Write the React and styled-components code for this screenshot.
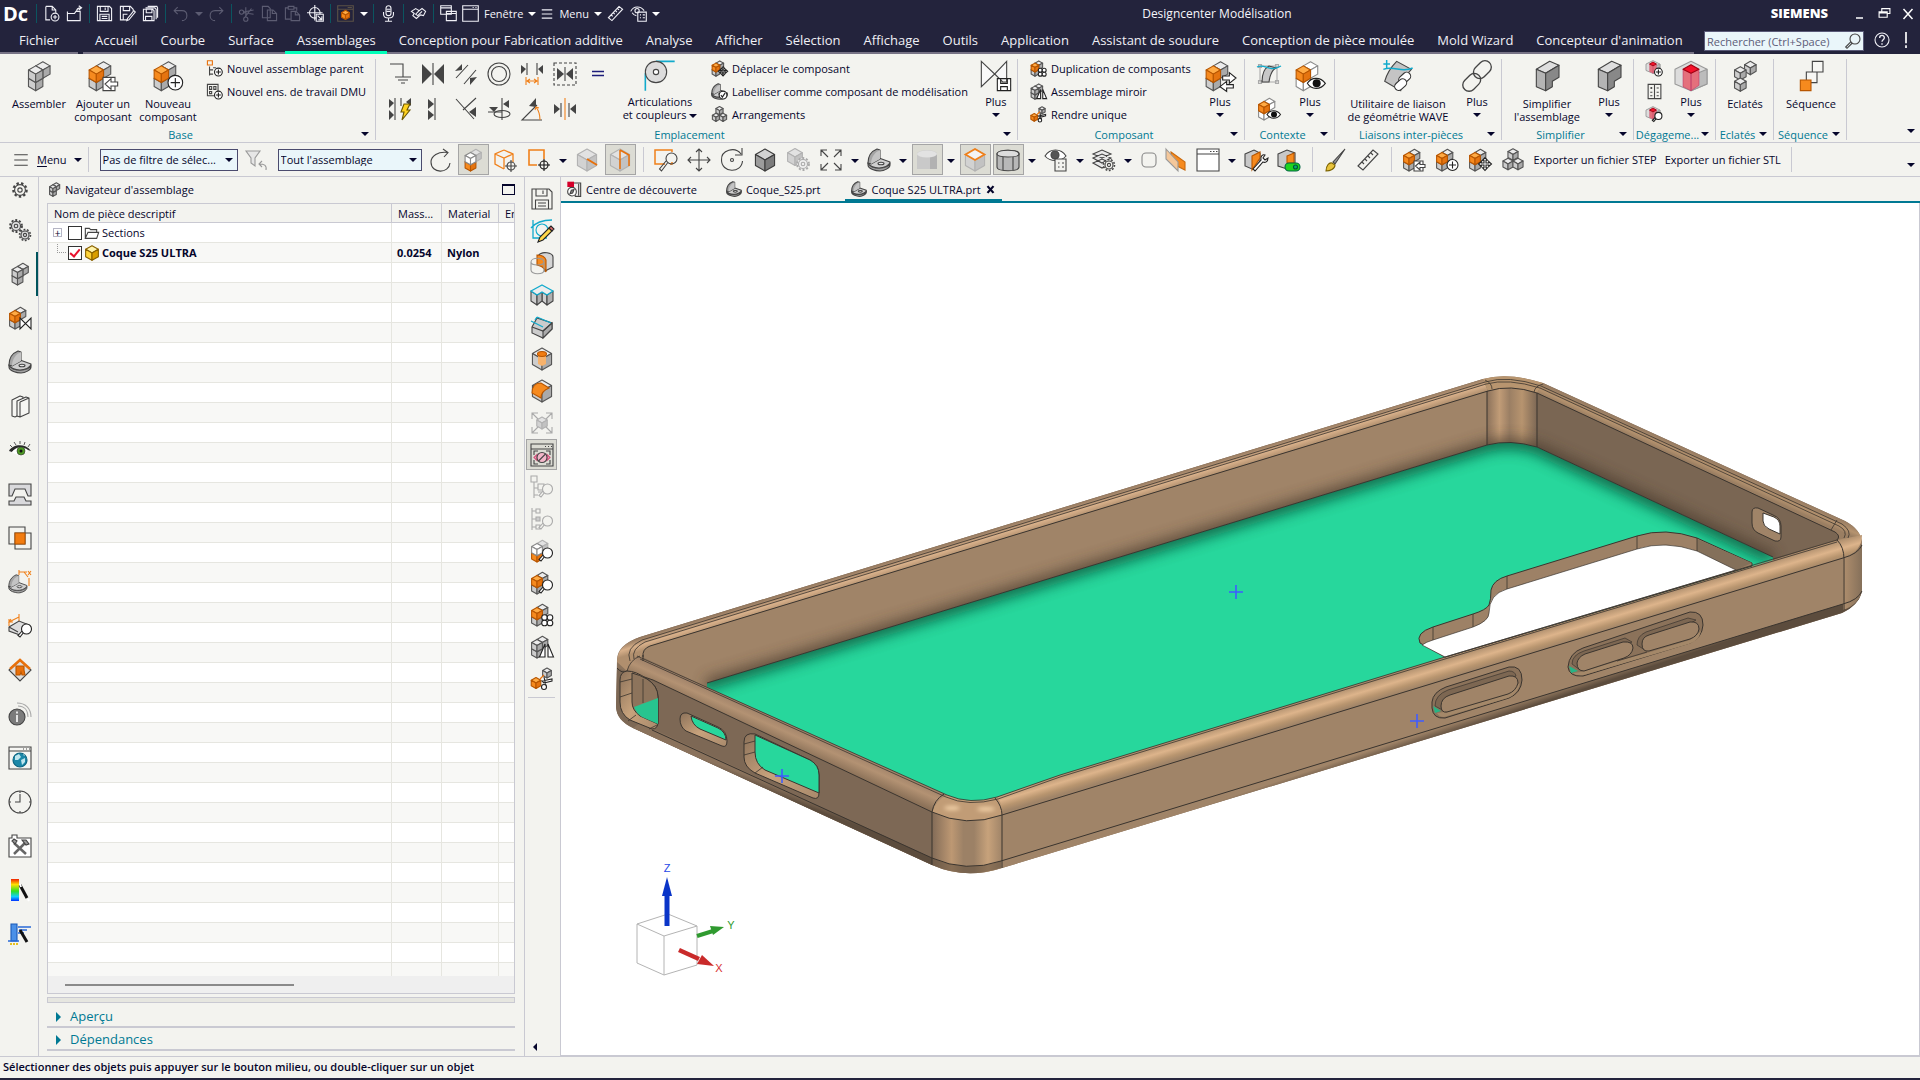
import React from 'react'
import styled, { createGlobalStyle, css } from 'styled-components'

const GlobalStyle = createGlobalStyle`
  * { box-sizing: border-box; }
  html, body, #root { height: 100%; margin: 0; }
  body {
    background: #f3f3ef;
    color: #05052b;
    font-family: "Open Sans", "Noto Sans", sans-serif;
    font-size: 11px;
    line-height: 13px;
    overflow: hidden;
  }
  button, input, select { font: inherit; color: inherit; }
  button { background: none; border: 0; padding: 0; cursor: pointer; }
`

/* ---------- icon parts ---------- */

const K = '#444'
const faces = {
  grey: ['#ececec', '#cdcdcd', '#aaaaaa', '#555'],
  dark: ['#d2d2d2', '#9c9c9c', '#7c7c7c', '#3c3c3c'],
  orange: ['#ffab45', '#f68a1e', '#e57410', '#b85600'],
  ghost: ['#fff', '#fff', '#fff', '#8a8a8a'],
  faint: ['#e2e2e2', '#d2d2d2', '#c2c2c2', '#b2b2b2'],
  yellow: ['#fff3a8', '#ffd43b', '#d99e00', '#8a6200'],
}

function Cube({ x, y, r, c = 'grey' }) {
  const [top, left, right, line] = faces[c]
  const w = r * 0.87
  const h = r / 2
  return (
    <g stroke={line} strokeLinejoin="round">
      <path fill={top} d={`M${x} ${y - r}l${w} ${h}l${-w} ${h}l${-w} ${-h}z`} />
      <path fill={left} d={`M${x - w} ${y - h}l${w} ${h}v${r}l${-w} ${-h}z`} />
      <path fill={right} d={`M${x + w} ${y - h}l${-w} ${h}v${r}l${w} ${-h}z`} />
    </g>
  )
}

const Asm = ({ a = 'grey', b = 'grey', c = 'grey', x = 9, y = 10.6 }) => (
  <>
    <Cube x={x} y={y + 6.2} r={6.2} c={c} />
    <Cube x={x + 5.4} y={y - 3.1} r={6.2} c={b} />
    <Cube x={x} y={y} r={6.2} c={a} />
  </>
)
const AsmO = () => <Asm a="orange" x={7} />
const PlusC = () => (
  <g stroke="#222">
    <circle cx="17.5" cy="17" r="5.5" fill="#fff" />
    <path d="M17.5 13.5v7M14 17h7" />
  </g>
)
const Mag = ({ c = '#222', fill = '#fff' }) => (
  <g stroke={c}>
    <path d="M15 17l-4 5-2-1.500L13.600 15.500" fill={fill} />
    <circle cx="17.500" cy="14" r="5" fill={fill} />
  </g>
)
const MoveC = ({ x = 17, y = 16, r = 6.5 }) => (
  <path
    fill="#fff"
    stroke="#222"
    d={`M${x} ${y - r}l2.500 2.800h-1.500v${r - 3.800}h${r - 3.800}v-1.500l2.800 2.500l-2.800 2.500v-1.500h${3.800 - r}v${r - 3.800}h1.500l-2.500 2.800l-2.500 -2.800h1.500v${3.800 - r}h${3.800 - r}v1.500l-2.800 -2.500l2.800 -2.500v1.500h${r - 3.800}v${3.800 - r}h-1.500z`}
  />
)
const Quad = () => (
  <g fill="#fff" stroke="#222">
    <circle cx="14.500" cy="14.500" r="2.800" /><circle cx="20" cy="14.500" r="2.800" />
    <circle cx="14.500" cy="20" r="2.800" /><circle cx="20" cy="20" r="2.800" />
  </g>
)
const Mirror = () => <path fill="#fff" stroke="#222" d="M15 9v13H9.500zM18 9v13h5.500z" />
const Bracket = () => (
  <g stroke={K} strokeLinejoin="round">
    <path fill="#a0a0a0" d="M1 15c1 3 6 5 11 5s11-2 11-5v2c0 3-6 6-10 6S1 21 1 17z" />
    <path fill="#cfcfcf" d="M1 15l11-5 11 4c0 3-6 6-11 6S2 18 1 15z" />
    <path fill="#a4a4a4" d="M1 15C1 8 5 3 10 1l3 1v9l-9 5z" />
    <path fill="#c4c4c4" d="M4 16C4 9 8 4 13 2v9z" stroke="none" />
    <ellipse cx="14" cy="15.500" rx="3" ry="1.300" fill="#e6e6e6" />
  </g>
)
const Clearance = () => (
  <g strokeLinejoin="round">
    <path fill="#dcdcdc" stroke="#999" d="M0 7L12 1l12 6v11l-12 5-12-5z" />
    <path fill="#bcbcbc" stroke="#999" d="M12 12l12-5v11l-12 5z" />
    <path fill="#e4707c" stroke="#b36" strokeWidth=".4" d="M6 7l6 3v13l-6-3zM12 10l6-3v12l-6 4z" />
    <path fill="#f5112a" stroke="#a00010" d="M6 7l6-3.500L18 7l-6 3z" />
  </g>
)
const Elbow = () => (
  <g strokeLinejoin="round">
    <path fill="#dedede" d="M4 7l10-6 7 3-10 6z" />
    <path fill="#b4b4b4" d="M4 7l7 3v13l-7-3z" />
    <path fill="#888" d="M11 10l10-6v9l-5 3v4l-5 3z" />
  </g>
)
const Gear = ({ x = 12, y = 12, r = 6, fill = 'none' }) => (
  <g fill={fill}>
    <circle cx={x} cy={y} r={r + 1.500} strokeDasharray={`${r * 0.45} ${r * 0.4}`} strokeWidth={r * 0.4} />
    <circle cx={x} cy={y} r={r} fill={fill} />
    <circle cx={x} cy={y} r={r * 0.4} />
  </g>
)
const Floppy = () => <path d="M2 2h17l3 3v17H2zM6 2v7h11V2M13 3.500v3.500M5.500 22v-9h13v9M8 16h8M8 19h8" />
const Expand = () => <path d="M2 8V2h6M2 2l7 7M22 8V2h-6M22 2l-7 7M2 16v6h6M2 22l7-7M22 16v6h-6M22 22l-7-7" />
const Folder = () => <path d="M2 20V5h6l2 2h9v4M2 20l4-9h16l-3 9z" />
const tri = (d) => <path d={d} fill={K} stroke="none" />

const icons = {
  /* quick access bar */
  newDoc: <><path d="M4 2h9l5 5v4M13 2v5h5M4 2v19h6" /><circle cx="17" cy="17" r="5.500" /><path d="M17 14v6M14 17h6" /></>,
  open: <><path d="M2 9v13h18V9h-6l-2 3H2M15 9c0-4 2-5 6-5M18 1l4 3-4 3" /></>,
  save: <Floppy />,
  saveAs: <><path d="M12 21H2V2h14l4 4v2M6 2v6h9V2M6 21v-8h6" /><path d="M21 8l2 2-9 11-3 1 1-3z" /></>,
  saveAll: <><path d="M2 6h13l2 2v14H2zM6 6v5h8V6M5 22v-6h9v6M5 4h13l2 2v14M8 2h13l1 2v14" /></>,
  undo: <path d="M8 3L3 8l5 5M3 8h11c5 0 7 3 7 7s-3 7-7 7" />,
  redo: <path d="M16 3l5 5-5 5M21 8H10c-5 0-7 3-7 7s3 7 7 7" />,
  cut: <><circle cx="5" cy="10" r="3" /><circle cx="11" cy="20" r="3" /><path d="M8 11l14 2M11 17V3M10 17l9-12M8 10l14-3" /></>,
  copy: <path d="M2 2h8l3 3v13H2zM9 7h8l5 5v10H9zM16 7v5h6" />,
  paste: <path d="M9 20H2V4h4M14 4h4v4M6 2h8v4H6zM10 9h7l5 5v8H10zM16 9v5h6" />,
  target: <><circle cx="11" cy="11" r="7.500" /><path d="M11 0v22M0 11h22" /><path fill="#23233c" d="M13 13h10v10H13z" /><path d="M15 15l6 6M21 16v5h-5" /></>,
  winCube: <><path stroke="#5b5246" d="M1 1h22v22H1zM1 6h22M15 3.500h6" /><Cube x={12} y={14} r={6.5} c="orange" /></>,
  mic: <><rect x="8.500" y="1" width="7" height="14" rx="3.500" /><path d="M5 10v3c0 7 14 7 14 0v-3M12 18v5M7 23h10M9 6h6M9 9h6" /></>,
  hands: <path d="M2 9l6-4 5 3 4-3 5 4-3 6-4-1-6 5-5-4 2-3zM13 8l-5 5 3 2 6-6" />,
  windows: <path d="M1 1h15v12H1zM1 4h15M9 9h14v13H9zM9 12h14" />,
  win: <path d="M1 1h22v22H1zM1 6h22M15 3.500h1.500M19 3.500h1.500" />,
  lines: <path d="M3 5h18M3 12h18M3 19h18" />,
  ruler: <path d="M2 18L17 2l5 4L7 22zM6 14l2 2M9 11l2 2M12 8l2 2M15 5l2 2" />,
  eyeList: <><path d="M1 9c4-8 14-8 19-1" /><circle cx="10" cy="8" r="3" /><path d="M3 11c2 3 4 4 6 4" /><path d="M11 10h12v13H11zM14 14h1.500M18 14h3M14 18h1.500M18 18h3" /></>,
  minimize: <path d="M4 20h14" strokeWidth="3" />,
  restore: <path d="M7 9V3h15v9h-5M2 9h15v10H2zM2 11h15" />,
  close: <path d="M3 2l18 20M21 2L3 22" strokeWidth="3" />,
  closeBold: <path d="M4 3l16 18M20 3L4 21" strokeWidth="6" />,
  help: <><circle cx="12" cy="12" r="10.500" /><path d="M8.500 9c0-5 7-5 7-.5 0 3-3.500 3-3.500 6M12 17v2" strokeWidth="2" /></>,
  bang: <path d="M12 0v17M12 20v4" strokeWidth="2.500" />,
  search: <><circle cx="15" cy="9" r="7.500" /><path d="M9 13l-8 8 2 2 8-8" /></>,

  /* ribbon */
  asm: <Asm x={9.5} />,
  asmArrow: <><AsmO /><path fill="#fff" d="M12 13h9v10h-9z" /><path fill="#fff" d="M23 16.500h-5V14l-4.500 4 4.500 4v-2.500h5z" /></>,
  asmPlus: <><AsmO /><PlusC /></>,
  newParent: <><path stroke="#e8700a" d="M2 1h7v6H2z" /><path d="M5 9v13M5 14h5M5 20h5M10 11h4" /><PlusC /></>,
  newSet: <><path d="M2 2h15v16H2zM5 5h3v4H5zM11 5h3v4h-3zM5 12h3v3H5z" /><PlusC /></>,
  fix: <path d="M2 2h13v13M7 15h16M10 18h10M13 21h4" />,
  touch: <><path d="M12 1v22" />{tri('M1 2l10 10L1 22z')}{tri('M23 2L13 12l10 10z')}</>,
  parallel: <><path d="M2 16L14 3M10 22L22 8" />{tri('M1 9l7-7v6z')}{tri('M23 15l-7 8v-7z')}</>,
  concentric: <><circle cx="12" cy="12" r="11" /><circle cx="12" cy="12" r="7.500" /></>,
  distance: <><path d="M7 1v12M17 1v12" />{tri('M1 3l5 4-5 5z')}{tri('M23 3l-5 4 5 5z')}<path stroke="#f0801a" d="M6 15v8M18 15v8M7 19h10M10 17l-3 2 3 2M14 17l3 2-3 2" /></>,
  fitBox: <><path strokeDasharray="3 2" d="M1 1h22v22H1z" /><path d="M12 5v14" />{tri('M4 6l7 6-7 6z')}{tri('M20 6l-7 6 7 6z')}</>,
  equal: <path stroke="#1d1d7a" strokeWidth="1.500" d="M6 9.500h12M6 13.500h12" />,
  auto: <><path d="M7 1v22M13 1v8" />{tri('M1 2l5 4-5 5z')}{tri('M1 13l5 5-5 5z')}{tri('M23 1l-5 4 5 4z')}<path fill="#ffd21f" stroke="#6b5600" d="M16 7h6l-3 6h3l-8 10 2-8h-3z" /></>,
  align: <><path d="M14 1v22" />{tri('M7 2l6 5-6 5z')}{tri('M7 13l6 5-6 5z')}</>,
  perp: <><path d="M2 2l18 20M9 13L22 1" />{tri('M22 10v10l-7-5z')}</>,
  axisLock: <><path d="M15 1v22M1 15h14" />{tri('M2 10h9l-4 5z')}{tri('M22 3v8l-6-4z')}<ellipse cx="15" cy="17" rx="8" ry="3.500" /></>,
  angle: <><path d="M22 23H2L17 8" />{tri('M9 9l7-8v9z')}<path stroke="#f0801a" d="M20 23c0-6-1-9-4-13M15 13l1-3 3 1" /></>,
  center: <><path stroke="#f0801a" d="M12 1v22" /><path d="M8 6v14M16 6v14" />{tri('M1 7l6 5-6 5z')}{tri('M23 7l-6 5 6 5z')}</>,
  joint: <><path stroke="#11aacc" d="M1 10v13M9 1h14" strokeWidth="1.200" /><circle cx="9" cy="9" r="8" fill="#dcdcdc" /><circle cx="9" cy="9" r="2" fill="#fff" /></>,
  asmMove: <><AsmO /><MoveC /></>,
  label: <><Bracket /><circle cx="17" cy="17" r="5.500" fill="#fff" stroke="#222" /><path stroke="#222" d="M14 17l2 3 4-6" /></>,
  pile: <><Cube x={12} y={6.5} r={5.8} /><Cube x={7} y={16} r={5.8} /><Cube x={17} y={16} r={5.8} /></>,
  plusSave: <><path fill="#f8f8f8" d="M1 1l10 9.500L1 20zM20 1l-9 9.500 6 6H20z" /><path fill="#fff" stroke="#222" d="M13 14h10v9H13zM15.500 14v3.500h5V14M15.500 23v-3h5v3" /></>,
  asmQuad: <><AsmO /><Quad /></>,
  asmMirror: <><Asm x={7} /><Mirror /></>,
  unique: <><Cube x={17} y={6} r={5} /><Cube x={6} y={16} r={5.500} c="orange" /><path stroke="#e8700a" d="M10 12l4-4" /><path stroke="#222" fill="#fff" d="M12 14l10-2v2l-8 2zM14 10l2 9" /><circle cx="14" cy="20" r="2.500" fill="#fff" stroke="#222" /></>,
  asmSwap: <><AsmO /><path fill="#fff" stroke="#222" d="M14 12h5V9.500l5 4-5 4V15h-5zM22 18.500h-5V16l-5 4 5 3.500V21h5z" /></>,
  ctxSketch: <><path stroke="#aaa" d="M3 4h17v16H3zM1.500 2.500h3v3h-3zM18.500 2.500h3v3h-3zM1.500 18.500h3v3h-3zM18.500 18.500h3v3h-3z" /><path fill="#c8c8c8" d="M5 20C5 12 8 6 12 4l7 2c-4 2-6 6-7 14z" /><path stroke="#11aacc" strokeWidth="1.300" d="M0 5c8-4 12 6 24-1" /></>,
  asmEye: <><Asm a="orange" b="ghost" c="ghost" x={7} /><path fill="#fff" stroke="#222" d="M10 17.500c3-5 10-5 13.500 0-3.500 5-10.500 5-13.500 0z" /><circle cx="17" cy="17.500" r="3" fill="#111" stroke="none" /></>,
  wave: <><path fill="#c4c4c4" d="M2 16C4 9 8 4 11 1l11 6c-5 5-7 10-8 16z" /><path stroke="#11aacc" strokeWidth="1.100" d="M1 7c8-3 14 3 22-1M1 3h5M3.500 0v6" /><g fill="#fff" stroke="#333"><rect x="12" y="10.500" width="10" height="6" rx="3" transform="rotate(-42 17 13.500)" /><rect x="9" y="15.500" width="10" height="6" rx="3" transform="rotate(-42 14 18.500)" /></g></>,
  link: <g strokeWidth="1"><rect x="8.500" y="2.500" width="15" height="9.500" rx="4.700" transform="rotate(-45 16 7.200)" /><rect x=".5" y="12" width="15" height="9.500" rx="4.700" transform="rotate(-45 8 16.700)" /></g>,
  elbow: <Elbow />,
  clrPlus: <><g transform="scale(.82)"><Clearance /></g><PlusC /></>,
  clrSheet: <path d="M3 2h18v20H3zM12 2v20M6 7h3M7.500 5.500v3M15 7h3M6 13h3M6 18h3M15 13h3M15 18h3" />,
  clrMag: <><g transform="scale(.82)"><Clearance /></g><Mag /></>,
  clearance: <Clearance />,
  exploded: <><Cube x={16} y={6} r={5} /><Cube x={8.500} y={10} r={5} /><Cube x={8.500} y={18.500} r={5} /></>,
  sequence: <g><path fill="#f6f6f3" d="M13 1h8v8h-8zM8.500 9h8v8h-8z" /><path fill="#f68a1e" stroke="#b85600" d="M4 15h8v8H4z" /></g>,

  /* second tool bar */
  funnel: <g stroke="#999"><path fill="#e6e6e6" d="M2 3h14l-5 7v8l-4-3v-5z" /><path d="M22 22c1-5-2-6-7-6M18 13l-3 3 3 3" /></g>,
  refresh: <path d="M15 1l5 3.500-4 4.500M20 4.500C10 3 3 8 3 14c0 12 18 12 19 1" />,
  asmLow: <><Asm a="ghost" b="faint" c="orange" x={9.5} /></>,
  cubeAim: <><path stroke="#f0801a" strokeWidth="1.300" d="M10 2l9 4v8M10 2L1 6v10l9 5M1 6l9 4 9-4M10 10v11" /><circle cx="17" cy="18" r="4" /><path d="M17 12v12M11 18h12" /></>,
  boxAim: <><path stroke="#f0801a" strokeWidth="1.600" d="M17 11V2H2v15h8" /><circle cx="17" cy="17" r="4" stroke="#111" /><path stroke="#111" d="M17 11v12M11 17h12" /></>,
  cubeEdge: <><Cube x={12} y={12} r={11} c="faint" /><path stroke="#e8700a" strokeWidth="2" d="M12 11l10 6" /></>,
  cubeWire: <><Cube x={12} y={12} r={11} c="faint" /><path stroke="#e8700a" strokeWidth="1.500" d="M12 2v19M12 2l9 5v11" /></>,
  zoomBox: <><path stroke="#f0801a" strokeWidth="1.500" d="M18 4V2H1v14h10M18 14v2h-2" /><circle cx="17.500" cy="10.500" r="5.500" /><path d="M13.500 15l-6 8-2-2 6.500-8" /></>,
  move: <path d="M12 1v22M1 12h22M9 4l3-3 3 3M9 20l3 3 3-3M4 9l-3 3 3 3M20 9l3 3-3 3" />,
  rotate: <><path d="M21 6C15-2 1 2 1.500 12c0 13 20 14 21 1M22 0v7h-7" /><circle cx="12" cy="12" r="1.500" /></>,
  cube: <Cube x={12} y={12} r={11} c="dark" />,
  cubeGear: <><Cube x={9} y={9} r={8.500} c="faint" /><g stroke="#aaa"><Gear x={17} y={16} r={4.500} fill="#eee" /></g></>,
  expand: <Expand />,
  bracket: <Bracket />,
  cylinder: <><path fill="#c9c9c9" stroke="none" d="M2 6c0-5 20-5 20 0v15H2z" /><path fill="#b2b2b2" stroke="none" d="M15 6h7v15h-7z" /><ellipse cx="12" cy="6" rx="10" ry="3.500" fill="#e2e2e2" stroke="none" /></>,
  cubeTop: <><Cube x={12} y={12} r={11} c="faint" /><path stroke="#f0801a" strokeWidth="1.800" fill="#f3f3f3" d="M12 1l9.500 5.500L12 12 2.500 6.500z" /></>,
  drum: <><path fill="#b8b8b8" d="M1 6c0-5 22-5 22 0v13c0 5-22 5-22 0z" /><path fill="#ddd" d="M1 6c0-5 22-5 22 0 0 4-22 4-22 0z" /><path d="M7 9v13M17 9v13" /></>,
  eyeSheet: <><path fill="#fff" d="M1 8c5-8 16-8 21 0-5 6-16 6-21 0z" /><circle cx="11" cy="7" r="4" fill="#555" /><path fill="#f3f3ef" d="M11 11h11v12H11zM14 15h1.500M18 15h2M14 19h1.500M18 19h2" /></>,
  layers: <><path fill="#e9e9e9" d="M1 15l9-4 9 4-9 5zM1 10l9-4 9 4-9 5zM1 6l9-4 9 4-9 4z" /><Gear x={17} y={17} r={4} fill="#f3f3ef" /></>,
  roundSq: <rect x="5" y="5" width="14" height="14" rx="4" stroke="#888" />,
  plane: <><path fill="#f68a1e" stroke="#c96a10" d="M8 4l14 10v8L8 15z" /><path fill="#f4c79a" stroke="#999" d="M3 1l12 13v9L3 11z" /></>,
  winLight: <><path fill="#fff" d="M1 1h22v22H1z" /><path d="M1 6h22M14 3.500h1.500M17 3.500h1.500M20 3.500h1.500" /></>,
  wrench: <><path fill="#c8c8c8" d="M1 6l9-4 6 3v12l-8 4-7-3z" /><path fill="#f68a1e" stroke="#b85600" d="M8 8l8-4v6l-8 12z" /><path fill="#fff" stroke="#222" d="M9 21l8-9c-1-4 2-6 4-5l-2 3 2 2 3-2c0 4-3 5-5 4l-8 9z" /></>,
  toggle: <><path fill="#c8c8c8" d="M1 6l9-4 8 3v10l-8 6-9-3z" /><path fill="#f68a1e" stroke="#b85600" d="M10 8l7-3v10h-7z" /><rect x="8" y="15" width="15" height="8" rx="4" fill="#1fd41f" stroke="#064" /><circle cx="18.500" cy="19" r="2" fill="#0a7" stroke="#053" /></>,
  brush: <><path fill="#999" d="M22 1L10 14l2 2z" /><path fill="#e8c33c" stroke="#7a6200" d="M3 23c0-5 3-9 6-8l3 2c0 4-5 6-9 6z" /></>,

  /* resource bar */
  gear: <Gear r={6.500} />,
  gears: <><Gear x={8} y={8} r={4.500} fill="#ddd" /><Gear x={17} y={17} r={4} fill="#ddd" /></>,
  asmTouch: <><AsmO /><path fill="#fff" stroke="#222" d="M12 12v11l11-11v11z" /></>,
  books: <g fill="#f6f6f3" strokeLinejoin="round"><path d="M4 6l8-4 3 1v16l-8 4-3-1z" /><path d="M9 7l9-4 3 1v15l-9 4-3-1zM12 8l9-4M12 8v15" /></g>,
  eye: <><path fill="#2a2a2a" stroke="none" d="M1 13c4-7 16-8 22 0l-3-1c-5-4-12-4-16 2z" /><path fill="#fff" stroke="none" d="M4 14c4-5 12-5 16-1-4 4-12 5-16 1z" /><circle cx="13" cy="13" r="4" fill="#4c9a22" stroke="#333" strokeWidth=".6" /><circle cx="13" cy="13" r="1.500" fill="#111" stroke="none" /><path d="M4 9L2 7M8 7L6 4M12 6V3M16 7l1-3M20 9l2-3" stroke="#333" strokeWidth=".8" /></>,
  press: <g fill="#d9d9dc"><path d="M1 2h22v12h-3l-3-7H7l-3 7H1zM1 23v-4h5l2-4h8l2 4h5v4z" /></g>,
  overlap: <><path d="M1 1h16v17H1zM7 7h16v16H7z" /><path fill="#f27c10" stroke="#b85600" d="M7 7h10v11H7z" /></>,
  bracketDim: <><g transform="translate(0 4) scale(.82)"><Bracket /></g><path stroke="#f0801a" d="M11 2h8M11 0v5M21 8v8M16 2l4 5M20 1l3 4M23 1l-3 4" /></>,
  dimMag: <><path stroke="#f0801a" d="M1 12V5M1 8l10-5M11 0v7M3 5L1 8l4 0" /><path fill="#ddd" d="M1 13l10-6 10 4-9 10L1 17z" /><path d="M1 13l9 5" /><g transform="translate(1 1)"><Mag /></g></>,
  diamond: <><path fill="#ddd" d="M12 2l11 10-11 11L1 12z" /><path stroke="#e8700a" strokeWidth="2.500" d="M2 11l10-9 10 9" /><path fill="#e8700a" stroke="#b85600" d="M8 8h8v4l1 5h-3l-1-3-1 3H8z" /></>,
  info: <><circle cx="9" cy="15" r="8" fill="#7b7b7b" /><path stroke="#fff" strokeWidth="1.600" d="M9 13v7M9 9.500v2" /><path stroke="#aaa" d="M10 4c6 0 10 4 10 11M9 1c8 0 14 5 14 14" /></>,
  globe: <><path fill="#f6f6f3" d="M1 1h22v22H1zM1 5h22M15 3h1M18 3h1M21 3h1" /><circle cx="12" cy="14" r="7" fill="#1c88a8" stroke="#0c6480" /><path fill="#bfe6ee" stroke="none" d="M7 10l4-2 2 3-3 3-3 0zM13 14l4-2v4l-3 3zM15 8l2 1-1 1z" /></>,
  clock: <><circle cx="12" cy="12" r="11" /><path d="M12 4v8H7M12 1v2M12 21v2M1 12h2M21 12h2" /></>,
  tools: <><path fill="#fff" d="M1 4h3V1h5v3h14v19H1z" /><path stroke="#666" strokeWidth="2.500" d="M6 9l12 11M18 8L6 20" /><path fill="#999" d="M4 7l3 3 2-3-3-2zM14 6h4l3 4-3 1z" /></>,
  rainbow: <><defs><linearGradient id="hue" x1="0" y1="0" x2="0" y2="1"><stop offset="0" stopColor="#f02000" /><stop offset=".25" stopColor="#ffe000" /><stop offset=".55" stopColor="#30e020" /><stop offset=".8" stopColor="#10d0ff" /><stop offset="1" stopColor="#0030ff" /></linearGradient></defs><path fill="url(#hue)" stroke="none" d="M3 1h8v22H3z" /><path stroke="#111" strokeWidth="3" d="M12 7l7 13" /><path stroke="#fff" strokeWidth="2" d="M12 6l1 3M20 21l1 2" /></>,
  layerWand: <><path fill="#4a90e8" stroke="#1a5ab8" d="M3 2h6v17H3z" /><path stroke="#2a6ad8" strokeWidth="1.500" d="M10 5h13M11 8h8M10 11h6M0 19h11" /><path stroke="#e8c020" strokeWidth="2" d="M2 22h8" strokeDasharray="2 1" /><path stroke="#111" strokeWidth="3" d="M12 8l7 12" /></>,

  /* vertical tool strip */
  sketch: <><path stroke="#11aacc" strokeWidth="1.300" d="M3 1v18h14M1 9C6 3 14 1 22 1" /><circle cx="12" cy="11" r="6" stroke="#11aacc" /><path fill="#ffd84a" stroke="#222" d="M8 23l2-5L19 9l3 3-9 9z" /><path fill="#e87070" stroke="#222" d="M19 9l2-2 3 3-2 2z" /></>,
  revolve: <><path fill="#d5d5d5" d="M8 5c4-6 15-3 15 1v10l-8 4V9z" /><path fill="#f68a1e" stroke="#b85600" d="M7 4c5 0 8 2 9 5v12c-2-5-5-6-9-7z" /><path stroke="#999" d="M1 11c0-5 13-5 13 0v8c0 5-13 5-13 0zM1 11c0 4 13 4 13 0" /></>,
  extrude: <g strokeLinejoin="round"><path fill="#cfcfcf" d="M1 8l6 4v10l-6-4zM12 9l5 3v10l-5-4z" /><path fill="#b0b0b0" d="M7 12l5-3v9l-5 4zM17 12l6-4v10l-6 4z" /><path stroke="#11aacc" strokeWidth="1.400" fill="#eee" d="M1 8l11-6 11 6-6 4-5-3-5 3z" /></g>,
  sweep: <><path fill="#ccc" d="M2 12l5-9 15 5v6l-9 9-11-5z" /><path fill="#aaa" d="M13 23v-7l9-8v6z" /><path stroke="#11aacc" strokeWidth="1.300" d="M1 6l12 6M7 2l14 6M7 2L5 5" /><path d="M2 12l11 4 9-8" /></>,
  hole: <><Cube x={12} y={12} r={11} /><path fill="#f7b26b" stroke="none" d="M8 8h8v9l-4 2-4-2z" /><ellipse cx="12" cy="7" rx="4.500" ry="2.500" fill="#f27c10" stroke="#b85600" /></>,
  blend: <><Cube x={12} y={12} r={11} /><path fill="#f68a1e" stroke="#b85600" d="M11 4C5 4 2 8 2 14l9 5c0-5 3-8 8-10z" /></>,
  cubeExpand: <g stroke="#aaa"><Expand /><Cube x={12} y={12} r={6} c="faint" /></g>,
  viewBox: <><path d="M1 1h22v22H1zM1 6h22M15 3.500h1M18 3.500h1M21 3.500h1" /><path d="M4 12V8h4M20 12V8h-4M4 17v4h4M20 17v4h-4" /><path fill="#f3a6bd" stroke="#d4507c" d="M4 14.500l3-3v6zM20 14.500l-3-3v6z" /><circle cx="12" cy="14.500" r="5" fill="#f3b6c9" /><path d="M8.500 18l7-7" /></>,
  treeMag: <g stroke="#aaa"><path d="M1 1h6v6H1zM4 7v16M4 13h4M4 20h4M8 9h6v6H8zM8 17h4" /><Mag c="#aaa" fill="#f3f3ef" /></g>,
  treeMag2: <g stroke="#aaa"><path d="M2 1v22M2 4h4M2 12h4M2 20h4M6 2h4v4H6zM6 18h4v4H6z" /><path fill="#ccc" d="M6 10h4v4H6z" /><Mag c="#aaa" fill="#f3f3ef" /></g>,
  asmLowMag: <><Asm a="ghost" b="faint" c="orange" x={7} /><Mag /></>,
  asmMag: <><AsmO /><Mag /></>,

  /* document tabs and tree */
  discover: <><path fill="#eee" d="M10 3h12v20H14z" /><path d="M19 4v18" /><circle cx="9" cy="16" r="6.500" fill="#fff" /><path d="M6 19l2-5 4-1-2 5z" fill="#888" /><path fill="#d4002a" stroke="none" d="M2 1h10v8H2z" /></>,
  folder: <Folder />,
  part: <Cube x={12} y={12} r={11} c="yellow" />,
}

const Svg = styled.svg`
  display: block;
  flex: none;
  overflow: visible;
`

function Icon({ n, s = 24, c = K }) {
  return (
    <Svg width={s} height={s} viewBox="0 0 24 24" fill="none" stroke={c} strokeWidth={(24 / s) * 1.1} aria-hidden="true">
      {icons[n]}
    </Svg>
  )
}

const Caret = styled.span`
  flex: none;
  width: 0;
  height: 0;
  display: inline-block;
  border: 4px solid transparent;
  border-top-color: ${(p) => p.$color || '#05052b'};
  border-bottom-width: 0;
  vertical-align: middle;
`

/* ---------- frame ---------- */

const Page = styled.div`
  display: flex;
  flex-direction: column;
  height: 100vh;
  border-bottom: 2px solid #23233c;
`

const TitleBar = styled.header`
  display: flex;
  align-items: center;
  height: 27px;
  flex: none;
  background: #23233c;
  color: #f5f5fa;
`
const Brand = styled.strong`
  width: 33px;
  padding-left: 3px;
  font-size: 20px;
  line-height: 24px;
  color: #fff;
`
const QuickButton = styled.button`
  display: flex;
  align-items: center;
  justify-content: center;
  gap: ${(p) => (p.$wide ? 5 : 0)}px;
  min-width: ${(p) => (p.$small ? 13 : 23)}px;
  padding: 0 ${(p) => (p.$wide ? 2 : 0)}px;
  height: 26px;
`
const QuickRule = styled.i`
  width: 1px;
  height: 19px;
  margin: 0 3px;
  background: #0b5560;
`
const AppTitle = styled.h1`
  flex: 1;
  margin: 0;
  text-align: center;
  font-size: 12px;
  font-weight: 400;
`
const Siemens = styled.strong`
  margin-right: 20px;
  font-size: 13px;
  font-weight: 800;
  color: #fff;
`
const WindowButton = styled(QuickButton)`
  width: 24px;
`

const TabBar = styled.nav`
  display: flex;
  align-items: stretch;
  height: 27px;
  flex: none;
  padding-right: 2px;
  background: #23233c;
  color: #f0f0f6;
`
const Tab = styled.a`
  padding: 6px 11px 0 12px;
  border-bottom: 2px solid #777386;
  color: inherit;
  font-size: 13px;
  line-height: 14px;
  white-space: nowrap;
  text-decoration: none;
  ${(p) => p.$file && css`padding: 6px 19px 0; margin-right: 5px;`}
  ${(p) => p.$active && css`border-bottom: 3px solid #00ffb9;`}
`
const SearchBox = styled.label`
  display: flex;
  align-items: center;
  width: 160px;
  height: 20px;
  flex: none;
  margin: 4px 6px 0 auto;
  padding: 0 2px;
  border: 1px solid #5a5a78;
  background: #eaf6fa;
  input {
    flex: 1;
    min-width: 0;
    border: 0;
    padding: 0;
    background: none;
    outline: none;
    color: #4c4c68;
  }
  input::placeholder { color: #5c5c78; opacity: 1; }
`

/* ---------- ribbon ---------- */

const RibbonBar = styled.div`
  display: flex;
  flex: none;
  height: 89px;
  padding-top: 5px;
  border-bottom: 1px solid #c9c9d2;
`
const Group = styled.section`
  display: flex;
  flex-direction: column;
  flex: none;
  width: ${(p) => p.$w}px;
  height: 81px;
  padding: 0 1px 0 7px;
  border-right: 1px solid #c9c9d2;
`
const GroupBody = styled.div`
  display: flex;
  height: 70px;
  > :last-child:not(:first-child) { margin-left: ${(p) => (p.$spread ? 'auto' : '5px')}; }
`
const GroupFoot = styled.div`
  display: flex;
  align-items: center;
  height: 12px;
  margin-left: -7px;
  padding-right: 5px;
  color: #007993;
  white-space: nowrap;
  span:first-child { flex: 1; text-align: center; }
`
const BigButton = styled.button`
  display: flex;
  flex-direction: column;
  align-items: center;
  gap: ${(p) => (p.$menu ? 3 : 5)}px;
  width: ${(p) => p.$w}px;
  flex: none;
  padding-top: 1px;
  white-space: nowrap;
  text-align: center;
`
const BigText = styled.span`
  display: flex;
  flex-direction: column;
  align-items: center;
  i { height: 13px; display: flex; align-items: center; }
`
const SmallList = styled.div`
  display: flex;
  flex-direction: column;
  gap: 5px;
  margin: 0 5px;
`
const SmallButton = styled.button`
  display: flex;
  align-items: center;
  gap: 4px;
  height: 18px;
  white-space: nowrap;
`
const IconGrid = styled.div`
  display: grid;
  grid-template-columns: repeat(${(p) => p.$cols}, 33px);
  grid-auto-rows: 29px;
  row-gap: 6px;
  align-content: start;
`
const GridButton = styled.button`
  display: grid;
  place-items: center;
`
const RibbonEnd = styled.button`
  margin: auto 5px 6px auto;
`

function Big({ icon, w, lines, menu }) {
  return (
    <BigButton $w={w} $menu={menu}>
      <Icon n={icon} s={32} />
      <BigText>
        {lines.map((l, i) => (
          <span key={l}>{l}{menu === 'inline' && i === 1 && <> <Caret /></>}</span>
        ))}
        {menu === 'below' && <i><Caret /></i>}
      </BigText>
    </BigButton>
  )
}

const Plus = ({ icon, w = 46 }) => <Big icon={icon} w={w} lines={['Plus']} menu="below" />

function RibbonGroup({ w, title, children, spread }) {
  return (
    <Group $w={w}>
      <GroupBody $spread={spread}>{children}</GroupBody>
      <GroupFoot><span>{title}</span><Caret /></GroupFoot>
    </Group>
  )
}

function Small({ items }) {
  return (
    <SmallList>
      {items.map(([icon, text]) => (
        <SmallButton key={icon} aria-label={text || icon}><Icon n={icon} s={17} />{text}</SmallButton>
      ))}
    </SmallList>
  )
}

function Grid({ cols, names }) {
  return (
    <IconGrid $cols={cols}>
      {names.map((n) => <GridButton key={n} aria-label={n}><Icon n={n} /></GridButton>)}
    </IconGrid>
  )
}

function Ribbon() {
  return (
    <RibbonBar>
      <RibbonGroup w={376} title="Base">
        <Big icon="asm" w={64} lines={['Assembler']} />
        <Big icon="asmArrow" w={64} lines={['Ajouter un', 'composant']} />
        <Big icon="asmPlus" w={66} lines={['Nouveau', 'composant']} />
        <Small items={[['newParent', 'Nouvel assemblage parent'], ['newSet', 'Nouvel ens. de travail DMU']]} />
      </RibbonGroup>
      <RibbonGroup w={642} title="Emplacement" spread>
        <Grid cols={7} names={['fix', 'touch', 'parallel', 'concentric', 'distance', 'fitBox', 'equal', 'auto', 'align', 'perp', 'axisLock', 'angle', 'center']} />
        <Big icon="joint" w={92} lines={['Articulations', 'et coupleurs']} menu="inline" />
        <Small items={[['asmMove', 'Déplacer le composant'], ['label', 'Labelliser comme composant de modélisation'], ['pile', 'Arrangements']]} />
        <Plus icon="plusSave" />
      </RibbonGroup>
      <RibbonGroup w={227} title="Composant" spread>
        <Small items={[['asmQuad', 'Duplication de composants'], ['asmMirror', 'Assemblage miroir'], ['unique', 'Rendre unique']]} />
        <Plus icon="asmSwap" />
      </RibbonGroup>
      <RibbonGroup w={90} title="Contexte" spread>
        <Grid cols={1} names={['ctxSketch', 'asmEye']} />
        <Plus icon="asmEye" />
      </RibbonGroup>
      <RibbonGroup w={167} title="Liaisons inter-pièces" spread>
        <Big icon="wave" w={112} lines={['Utilitaire de liaison', 'de géométrie WAVE']} />
        <Plus icon="link" />
      </RibbonGroup>
      <RibbonGroup w={132} title="Simplifier" spread>
        <Big icon="elbow" w={76} lines={['Simplifier', "l'assemblage"]} />
        <Plus icon="elbow" />
      </RibbonGroup>
      <RibbonGroup w={82} title="Dégageme..." spread>
        <Small items={[['clrPlus', ''], ['clrSheet', ''], ['clrMag', '']]} />
        <Plus icon="clearance" />
      </RibbonGroup>
      <RibbonGroup w={58} title="Eclatés">
        <Big icon="exploded" w={44} lines={['Eclatés']} />
      </RibbonGroup>
      <RibbonGroup w={73} title="Séquence">
        <Big icon="sequence" w={60} lines={['Séquence']} />
      </RibbonGroup>
      <RibbonEnd aria-label="Options du ruban"><Caret /></RibbonEnd>
    </RibbonBar>
  )
}

/* ---------- selection bar ---------- */

const ToolBar = styled.div`
  display: flex;
  align-items: center;
  flex: none;
  height: 34px;
  padding-left: 12px;
  border-bottom: 1px solid #c9c9d2;
`
const MenuButton = styled.button`
  display: flex;
  align-items: center;
  gap: 7px;
  u { text-underline-offset: 2px; }
`
const Rule = styled.i`
  flex: none;
  width: 1px;
  height: 25px;
  margin: 0 6px;
  background: #c9c9d2;
`
const SelectBox = styled.div`
  display: grid;
  align-items: center;
  width: ${(p) => p.$w}px;
  height: 22px;
  margin: 0 2px 0 5px;
  border: 1px solid #4b4b6e;
  background: #eaf6fa;
  > * { grid-area: 1 / 1; }
  select {
    appearance: none;
    width: 100%;
    height: 20px;
    border: 0;
    padding: 0 14px 0 2px;
    background: none;
  }
  span { justify-self: end; margin-right: 4px; pointer-events: none; }
`
const ToolButton = styled.button`
  display: grid;
  place-items: center;
  flex: none;
  width: ${(p) => (p.$narrow ? 21 : 31)}px;
  height: 31px;
  margin: 0 1px;
  ${(p) => p.$on && css`
    background: #dcdcd4;
    outline: 1px solid #a5a5a5;
    outline-offset: -1px;
  `}
`
const ToolCaret = styled.button`
  width: 15px;
  flex: none;
`
const TextButton = styled.button`
  padding: 0 4px;
  white-space: nowrap;
`

const tools = [
  'refresh', '*asmLow', 'cubeAim', 'boxAim', 'v', 'cubeEdge', '*cubeWire', '|',
  'zoomBox', 'move', 'rotate', 'cube', 'cubeGear', 'expand', 'v', 'bracket', 'v',
  '*cylinder', 'v', '*cubeTop', '*drum', 'v', 'eyeSheet', 'v', 'layers', 'v',
  'roundSq', 'plane', 'winLight', 'v', 'wrench', 'toggle', '|',
  'brush', 'ruler', '|', 'asmArrow', 'asmPlus', 'asmMove', 'pile',
]

function Tools() {
  return (
    <ToolBar>
      <MenuButton><Icon n="lines" s={18} /><span><u>M</u>enu</span> <Caret /></MenuButton>
      <Rule />
      <SelectBox $w={138}>
        <select aria-label="Filtre de sélection"><option>Pas de filtre de sélec...</option></select>
        <Caret />
      </SelectBox>
      <ToolButton aria-label="Filtre"><Icon n="funnel" /></ToolButton>
      <SelectBox $w={144}>
        <select aria-label="Portée"><option>Tout l'assemblage</option></select>
        <Caret />
      </SelectBox>
      {tools.map((t, i) => {
        if (t === '|') return <Rule key={i} />
        if (t === 'v') return <ToolCaret key={i} aria-label="Options"><Caret /></ToolCaret>
        const on = t[0] === '*'
        const n = on ? t.slice(1) : t
        return (
          <ToolButton key={i} aria-label={n} $on={on} $narrow={n === 'roundSq'}><Icon n={n} /></ToolButton>
        )
      })}
      <TextButton>Exporter un fichier STEP</TextButton>
      <TextButton>Exporter un fichier STL</TextButton>
      <Rule />
      <RibbonEnd aria-label="Options de barre"><Caret /></RibbonEnd>
    </ToolBar>
  )
}

/* ---------- work area ---------- */

const Work = styled.main`
  display: flex;
  flex: 1;
  min-height: 0;
`
const Rail = styled.nav`
  display: flex;
  flex-direction: column;
  flex: none;
  width: 39px;
  border-right: 1px solid #c9c9d2;
`
const RailButton = styled.button`
  display: grid;
  place-items: center;
  height: ${(p) => (p.$first ? 31 : 44)}px;
  padding: 0 0 ${(p) => (p.$first ? 5 : 0)}px 4px;
  border-right: 2px solid ${(p) => (p.$active ? '#00545c' : 'transparent')};
`
const Panel = styled.aside`
  display: flex;
  flex-direction: column;
  flex: none;
  width: 485px;
  padding: 0 9px 5px 8px;
`
const PanelTitle = styled.h2`
  display: flex;
  align-items: center;
  gap: 3px;
  height: 26px;
  margin: 0;
  padding-bottom: 2px;
  font-size: 11px;
  font-weight: 400;
  button { margin-left: auto; width: 13px; height: 11px; border: 1px solid #05052b; border-top-width: 2px; }
`
const TableBox = styled.div`
  display: flex;
  flex-direction: column;
  flex: 1;
  min-height: 0;
  border: 1px solid #c9c9d2;
`
const Clip = styled.div`
  flex: 1;
  min-height: 0;
  overflow: hidden;
`
const Tree = styled.table`
  width: 100%;
  table-layout: fixed;
  border-spacing: 0;
  background: #fff;
  th, td {
    height: 20px;
    padding: 0 5px;
    overflow: hidden;
    white-space: nowrap;
    text-align: left;
    font-weight: inherit;
    border: 1px solid #e6e6e0;
    border-width: 0 1px 1px 0;
  }
  th { height: 19px; padding-left: 6px; background: #f3f3ef; border-color: #c9c9d2; font-weight: 400; }
  th:last-child, td:last-child { padding-right: 0; border-right: 0; }
  tbody tr:nth-child(even) { background: #f8f8f6; }
  tr.main { font-weight: 700; }
`
const NameCell = styled.span`
  display: flex;
  align-items: center;
  gap: 2px;
`
const Expander = styled.button`
  display: grid;
  place-items: center;
  width: 9px;
  height: 9px;
  margin-right: 4px;
  border: 1px solid #b5b5c4;
  background: #fff;
  font-size: 10px;
  line-height: 8px;
`
const Branch = styled.i`
  width: 9px;
  height: 11px;
  margin: -11px 0 0 4px;
  border: 1px dotted #999;
  border-width: 0 0 1px 1px;
`
const Check = styled.input`
  appearance: none;
  display: grid;
  place-items: center;
  width: 14px;
  height: 14px;
  margin: 0;
  border: 1px solid #333;
  background: #fff;
  &:checked::after {
    content: "";
    width: 4px;
    height: 8px;
    margin-bottom: 2px;
    border: solid #e8112d;
    border-width: 0 2px 2px 0;
    transform: rotate(40deg);
  }
`
const ScrollTrack = styled.div`
  height: 17px;
  padding: 8px 0 0 17px;
  background: #efefef;
  &::before { content: ""; display: block; width: 51%; height: 2px; background: #8a8a8a; }
`
const Splitter = styled.div`
  height: 6px;
  margin: 3px 0 2px;
  border: 1px solid #c9c9d2;
  background: #e6e6e0;
`
const Fold = styled.button`
  display: flex;
  align-items: center;
  gap: 9px;
  height: 23px;
  padding: 2px 0 0 9px;
  border-bottom: 2px solid #c9c9d2;
  color: #007993;
  font-size: 13px;
  &::before { content: ""; border: 5px solid transparent; border-left-color: #007993; border-right-width: 0; }
`
const Strip = styled.div`
  display: flex;
  flex-direction: column;
  align-items: center;
  flex: none;
  width: 37px;
  padding: 6px 2px 0 0;
  border: 1px solid #c9c9d2;
  border-width: 0 1px;
  hr { width: 27px; margin: 2px 0 0; border: 0; border-top: 1px solid #c9c9d2; }
`
const StripButton = styled(ToolButton)`
  margin: 0 0 1px;
`
const StripEnd = styled.button`
  margin: auto auto 5px 8px;
  border: 4px solid transparent;
  border-right-color: #05052b;
  border-left-width: 0;
`
const Document = styled.section`
  display: flex;
  flex-direction: column;
  flex: 1;
  min-width: 0;
`
const DocTabs = styled.div`
  display: flex;
  height: 26px;
  border-bottom: 2px solid #007993;
`
const DocTab = styled.button`
  display: flex;
  align-items: center;
  gap: 4px;
  padding: 0 24px 0 5px;
  ${(p) => p.$active && css`
    gap: 5px;
    padding: 2px 7px 0 6px;
    border-bottom: 2px solid #007993;
  `}
`
const Canvas = styled.div`
  flex: 1;
  min-height: 0;
  border: 1px solid #c9c9d2;
  border-width: 0 1px 1px 0;
  background: #fff;
  svg { display: block; width: 100%; height: 100%; }
`
const Status = styled.footer`
  flex: none;
  height: 22px;
  padding: 3px;
  border-top: 1px solid #c9c9d2;
  font-weight: 600;
`

const railIcons = [
  'gears', 'asm', 'asmTouch', 'bracket', 'books', 'eye', 'press', 'overlap', 'bracketDim',
  'dimMag', 'diamond', 'info', 'globe', 'clock', 'tools', 'rainbow', 'layerWand',
]
const stripIcons = [
  'save', 'sketch', 'revolve', 'extrude', 'sweep', 'hole', 'blend', 'cubeExpand', '*viewBox',
  'treeMag', 'treeMag2', 'asmLowMag', 'asmMag', 'asmQuad', 'asmMirror', 'unique',
]

function Navigator() {
  return (
    <Panel>
      <PanelTitle><Icon n="asm" s={15} />Navigateur d'assemblage<button aria-label="Agrandir" /></PanelTitle>
      <TableBox>
        <Clip>
          <Tree>
            <colgroup><col /><col width="50" /><col width="57" /><col width="15" /></colgroup>
            <thead>
              <tr><th>Nom de pièce descriptif</th><th>Mass...</th><th>Material</th><th>En</th></tr>
            </thead>
            <tbody>
              <tr>
                <td>
                  <NameCell>
                    <Expander aria-label="Développer">+</Expander>
                    <Check type="checkbox" id="sections" />
                    <Icon n="folder" s={16} />
                    <label htmlFor="sections">Sections</label>
                  </NameCell>
                </td>
                <td /><td /><td />
              </tr>
              <tr className="main">
                <td>
                  <NameCell>
                    <Branch />
                    <Check type="checkbox" id="coque" defaultChecked />
                    <Icon n="part" s={16} />
                    <label htmlFor="coque">Coque S25 ULTRA</label>
                  </NameCell>
                </td>
                <td>0.0254</td><td>Nylon</td><td />
              </tr>
              {Array.from({ length: 36 }, (_, i) => <tr key={i}><td /><td /><td /><td /></tr>)}
            </tbody>
          </Tree>
        </Clip>
        <ScrollTrack />
      </TableBox>
      <Splitter />
      <Fold>Aperçu</Fold>
      <Fold>Dépendances</Fold>
    </Panel>
  )
}

/* ---------- 3D view ---------- */

const FLOOR = 'M707 683L1487 445Q1510 439 1537 447L1773 557L1773 560L1445 657L1060 775L997 797Q970 805 947 795L707 687z'
const WALL_L = 'M643 655Q642 649 650 646L1488 391L1487 445L707 683V687L640 656z'
const WALL_R = 'M1537 393L1835 532Q1840 536 1837 540L1773 560V557L1537 447z'
const CORNER = 'M1487 391Q1510 384 1537 393V447Q1510 439 1487 445z'
const CUT = 'M1445 657L1420 643Q1415 633 1433 627L1473 614Q1486 610 1489 605Q1491 600 1491 590Q1493 580 1507 576L1637 536Q1665 527 1697 538L1752 563L1752 566z'
const CUT_LOW = 'M1445 657L1422 645Q1426 642 1433 640L1473 627Q1489 621 1489 613Q1489 594 1507 589L1637 549Q1665 540 1697 551L1736 570z'
const LINE = '#3b352f'

const Cross = ({ x, y }) => <path d={`M${x - 7} ${y}h14M${x} ${y - 7}v14`} stroke="#3f5cff" strokeWidth="1.6" />

function PhoneCase() {
  return (
    <svg viewBox="561 203 1358 852" fill="none" preserveAspectRatio="xMidYMid meet" role="img" aria-label="Coque S25 ULTRA">
      <defs>
        <linearGradient id="rimFront" gradientUnits="userSpaceOnUse" x1="1400" y1="671" x2="1406" y2="691">
          <stop offset="0" stopColor="#a98a6a" /><stop offset=".45" stopColor="#ddb48b" />
          <stop offset=".75" stopColor="#b8956f" /><stop offset="1" stopColor="#a08468" />
        </linearGradient>
        <linearGradient id="rimBack" gradientUnits="userSpaceOnUse" x1="1060" y1="508" x2="1064" y2="521">
          <stop offset="0" stopColor="#8d735b" /><stop offset=".55" stopColor="#d8b08a" /><stop offset="1" stopColor="#b08f6e" />
        </linearGradient>
        <linearGradient id="rimRight" gradientUnits="userSpaceOnUse" x1="1695" y1="452" x2="1690" y2="463">
          <stop offset="0" stopColor="#927860" /><stop offset=".6" stopColor="#b5936f" /><stop offset="1" stopColor="#9a7e62" />
        </linearGradient>
        <linearGradient id="rimLeft" gradientUnits="userSpaceOnUse" x1="792" y1="726" x2="784" y2="744">
          <stop offset="0" stopColor="#a1836a" /><stop offset=".4" stopColor="#b39273" /><stop offset="1" stopColor="#8c7259" />
        </linearGradient>
        <linearGradient id="lipFront" gradientUnits="userSpaceOnUse" x1="1422" y1="733" x2="1425" y2="742">
          <stop offset="0" stopColor="#a08468" /><stop offset="1" stopColor="#5c4c3d" />
        </linearGradient>
        <linearGradient id="lipLeft" gradientUnits="userSpaceOnUse" x1="792" y1="792" x2="789" y2="800">
          <stop offset="0" stopColor="#8a725c" /><stop offset="1" stopColor="#5c4c3d" />
        </linearGradient>
        <linearGradient id="cornerIn" x1="0" x2="1" y1="0" y2="0">
          <stop offset="0" stopColor="#8c725b" /><stop offset=".25" stopColor="#c19c77" /><stop offset=".45" stopColor="#9b7f64" />
          <stop offset=".7" stopColor="#b7946f" /><stop offset="1" stopColor="#7d6855" />
        </linearGradient>
        <linearGradient id="cornerOut" x1="0" x2="1" y1="0" y2="0">
          <stop offset="0" stopColor="#826b57" /><stop offset=".28" stopColor="#bd9873" /><stop offset=".45" stopColor="#9c8166" />
          <stop offset=".6" stopColor="#9c8166" /><stop offset=".8" stopColor="#c7a27b" /><stop offset="1" stopColor="#a08468" />
        </linearGradient>
        <linearGradient id="cornerEnd" x1="0" x2="1" y1="0" y2="0">
          <stop offset="0" stopColor="#b08f6e" /><stop offset="1" stopColor="#85705a" />
        </linearGradient>
        <linearGradient id="tube" x1="0" x2="1" y1="0" y2="1">
          <stop offset="0" stopColor="#8c725a" /><stop offset=".5" stopColor="#c7a27c" /><stop offset="1" stopColor="#a98a6c" />
        </linearGradient>
        <filter id="soft" filterUnits="userSpaceOnUse" x="561" y="203" width="1358" height="852"><feGaussianBlur stdDeviation="7" /></filter>
        <filter id="glow" filterUnits="userSpaceOnUse" x="900" y="780" width="140" height="60"><feGaussianBlur stdDeviation="2" /></filter>
        <clipPath id="inFloor"><path d={FLOOR} /></clipPath>
        <clipPath id="inWalls"><path d={WALL_L} /><path d={WALL_R} /><path d={CORNER} /></clipPath>
      </defs>

      {/* body */}
      <path fill="#8b735c" d="M617 660Q617 645 640 637L1483 379Q1508 372 1543 383L1845 521Q1862 530 1862 544V590Q1860 604 1842 613L1002 868Q966 880 932 865L633 728Q616 720 616 706z" />
      <path fill="#7d6855" d="M617 668L653 680L932 812V865L633 728Q616 720 616 706z" />
      <path fill="#a08468" d="M1002 815L1843 558V604L1001 861z" />
      <path fill="url(#lipFront)" d="M1001 861L1843 604L1862 592Q1858 606 1842 613L1002 868z" />
      <path fill="url(#lipLeft)" d="M640 723L932 858V865L633 728z" />
      <path fill="url(#cornerOut)" d="M932 812Q966 828 1002 815V868Q966 880 932 865z" />
      <path fill="#5c4c3d" opacity=".55" d="M932 858Q966 873 1001 861V868Q966 880 932 865z" />
      <path fill="url(#cornerEnd)" d="M1843 558Q1860 552 1862 544V590Q1860 604 1843 610z" />

      {/* rims */}
      <path fill="url(#rimBack)" d="M617 662Q617 645 640 637L1483 379L1488 391L650 646Q642 650 643 657L627 671z" />
      <path fill="#b8956f" d="M1483 379Q1508 372 1543 383L1537 393Q1510 384 1488 391z" />
      <path fill="url(#rimRight)" d="M1543 383L1845 521Q1862 530 1862 544L1840 542Q1840 535 1835 532L1537 393z" />
      <path fill="url(#rimLeft)" d="M637 656L947 795Q936 801 932 812L653 680L627 671Q630 660 637 656z" />
      <path fill="url(#rimFront)" d="M997 797L1060 775L1445 657L1837 540L1862 535Q1862 552 1843 558L1002 815z" />
      <path fill="#c19c76" d="M947 795Q970 805 997 797Q1003 804 1002 815Q966 828 932 812Q936 800 947 795z" />
      <g fill="#f7d6ac" filter="url(#glow)">
        <ellipse cx="952" cy="808" rx="8" ry="2" />
        <ellipse cx="986" cy="809" rx="9" ry="2" />
      </g>

      {/* inside */}
      <path fill="#a08468" d={WALL_L} />
      <path fill="#7a6653" d={WALL_R} />
      <path fill="url(#cornerIn)" d={CORNER} />
      <g clipPath="url(#inWalls)">
        <path stroke="#4a3a2d" strokeWidth="16" opacity=".75" filter="url(#soft)" d="M707 687L1487 449Q1510 443 1537 451L1773 561" />
      </g>
      <path fill="#27d79c" d={FLOOR} />
      <g clipPath="url(#inFloor)">
        <path stroke="#0f5a40" strokeWidth="18" opacity=".85" filter="url(#soft)" d="M700 683L1487 443Q1510 437 1537 445L1773 555" />
      </g>
      <path fill="#9d8166" stroke={LINE} d={CUT} />
      <path fill="#84705a" d="M1697 539L1752 563L1736 570L1697 551z" />
      <path fill="#fff" stroke={LINE} strokeWidth=".7" d={CUT_LOW} />
      <path stroke={LINE} strokeWidth=".8" d="M1433 627v13M1473 614v13M1507 576v13M1637 536v13M1697 538v13" />

      {/* edges */}
      <g stroke={LINE} strokeWidth="1">
        <path d="M707 683L1487 445Q1510 439 1537 447L1773 557" />
        <path d="M643 657Q642 649 650 646L1488 391Q1510 384 1537 393L1835 532Q1841 536 1837 540" />
        <path d="M1487 391v54M1537 393v54M643 655v6" />
        <path d="M1837 540L1445 657L1060 775L997 797Q970 805 947 795L637 656M1837 542L1445 659L1060 777L998 799Q968 807 946 797L640 659" strokeWidth=".8" />
        <path d="M1843 558L1002 815Q966 828 932 812L653 680L627 671M1843 558Q1858 554 1862 545" />
        <path d="M1862 591Q1858 600 1843 604L1001 861Q966 873 932 858L652 730" />
        <path d="M932 865V812Q934 800 944 794M1002 868V815Q1002 806 995 798M1844 610V559Q1844 547 1837 540" />
        <path d="M627 671Q630 660 640 656M630 661Q625 648 642 640L1485 382Q1508 375 1541 386L1842 524Q1852 531 1848 538" strokeWidth=".8" />
        <path d="M634 659Q631 649 645 642L1486 384Q1508 378 1540 388L1839 526Q1848 531 1844 538M1831 530l6-10M1485 380q7 3 7 9M1543 384q-8 2-9 8" strokeWidth=".8" />
        <path d="M617 668Q622 674 627 671" />
      </g>

      {/* charging side openings */}
      <g stroke={LINE} strokeWidth="1">
        <path fill="url(#tube)" d="M627 671Q636 671 647 679Q658 686 658 697V722Q658 729 652 729L630 720Q620 714 620 702V680Q620 672 627 671z" />
        <path fill="#8d745c" d="M632 673Q640 675 647 679Q658 686 658 697V724L640 716Q632 710 632 702z" />
        <path fill="#27c48f" stroke="none" d="M634 707L658 698V724L642 717Q636 713 634 707z" />
        <path d="M643 679v24M620 682l12-3M620 697l12-4M628 721l8-6M649 729l8-4" strokeWidth=".8" />
        <path fill="url(#tube)" d="M680 719Q680 712 687 713L718 727Q727 731 727 741Q727 748 722 746L686 731Q680 727 680 719z" />
        <path fill="#27d79c" d="M691 716L718 728Q726 732 726 740L700 729Q692 725 691 716z" />
        <path fill="url(#tube)" d="M744 742Q744 732 755 734L810 760Q819 765 819 775V793Q819 800 813 798L755 773Q744 767 744 757z" />
        <path fill="#27d79c" d="M755 735L810 760Q819 765 819 775V793L765 770Q755 764 755 752z" />
        <path d="M744 744l11-3M744 755l11-3M755 773l8-6" strokeWidth=".8" />
        <path fill="#a08468" d="M1752 512Q1752 507 1758 508L1773 515Q1781 518 1781 526V537Q1781 542 1775 541L1758 533Q1752 530 1752 523z" />
        <path fill="#fff" d="M1763 513L1774 517Q1780 520 1780 526V534L1769 529Q1763 526 1763 521z" />
      </g>

      {/* side keys */}
      <g stroke={LINE} strokeWidth="1">
        <path fill="#8b725a" d="M1432 708V702Q1433 692 1446 687L1509 667Q1522 665 1522 680Q1521 693 1509 698L1445 718Q1433 719 1432 708z" />
        <path fill="#27b485" stroke="none" d="M1433 706l8 5-6 2z" />
        <path fill="#a48869" stroke="none" d="M1437 713l7-1 64-20 12-9q-2 11-12 15l-64 19q-5 0-7-4z" />
        <path fill="#7d6752" d="M1435 706Q1435 695 1448 690L1509 671Q1515 671 1516 676L1446 712z" strokeWidth=".7" />
        <path fill="#a08468" d="M1441 706Q1441 698 1450 695L1509 676Q1518 675 1518 683Q1516 691 1508 694L1447 712Q1441 713 1441 706z" />
        <path fill="#8b725a" d="M1568 667Q1569 653 1583 648L1690 612Q1703 611 1703 625Q1702 638 1690 643L1583 676Q1569 677 1568 667z" />
        <path fill="#27b485" stroke="none" d="M1569 666l9 5-7 2z" />
        <path fill="#a48869" stroke="none" d="M1573 673l8-1 44-13 22-6 43-13 11-9q-2 10-12 13l-105 31q-8 1-11-2z" />
        <path fill="#7d6752" d="M1572 664Q1572 655 1584 651L1625 638L1632 642L1580 670z" strokeWidth=".7" />
        <path fill="#a08468" d="M1577 663Q1578 657 1585 654L1623 642Q1633 641 1633 648Q1632 655 1624 658L1584 671Q1577 671 1577 663z" />
        <path fill="#7d6752" d="M1637 645Q1637 636 1646 632L1688 618L1696 620L1645 650z" strokeWidth=".7" />
        <path fill="#a08468" d="M1642 644Q1642 637 1649 635L1690 622Q1699 621 1699 629Q1698 636 1690 639L1649 651Q1642 652 1642 644z" />
        <path d="M1617 661l30-9" strokeWidth=".8" />
      </g>

      <Cross x={1236} y={592} />
      <Cross x={782} y={776} />
      <Cross x={1417} y={721} />

      {/* triad */}
      <g stroke="#b4b4b4">
        <path fill="#fff" d="M637 924L668 914L697 926V965L664 975L637 963z" />
        <path d="M637 924L664 936L697 926M664 936V975" />
      </g>
      <path stroke="#0a35c8" strokeWidth="5" d="M667 926v-30" />
      <path fill="#0a35c8" d="M667 877l5 19h-10z" />
      <path stroke="#2f9a2f" strokeWidth="4" d="M697 936l16-5" />
      <path fill="#2f9a2f" d="M724 927l-14-1 3 9z" />
      <path stroke="#c92a2a" strokeWidth="4.500" d="M679 950l20 9" />
      <path fill="#c92a2a" d="M714 966l-12-11-5 9z" />
      <g fontFamily="Liberation Sans, sans-serif" fontSize="11" textAnchor="middle">
        <text x="667" y="872" fill="#2848e8">Z</text>
        <text x="731" y="929" fill="#2f9a2f">Y</text>
        <text x="719" y="972" fill="#d83030">X</text>
      </g>
    </svg>
  )
}

/* ---------- app ---------- */

const tabs = [
  'Accueil', 'Courbe', 'Surface', 'Assemblages', 'Conception pour Fabrication additive', 'Analyse',
  'Afficher', 'Sélection', 'Affichage', 'Outils', 'Application', 'Assistant de soudure',
  'Conception de pièce moulée', 'Mold Wizard', "Concepteur d'animation",
]

const Q = ({ n, c = '#f0f0f6', s = 17 }) => <QuickButton aria-label={n}><Icon n={n} s={s} c={c} /></QuickButton>
const dim = '#5c5c72'

function App() {
  return (
    <Page>
      <GlobalStyle />
      <TitleBar>
        <Brand>Dc</Brand>
        <QuickRule />
        <Q n="newDoc" /><Q n="open" />
        <QuickRule />
        <Q n="save" /><Q n="saveAs" /><Q n="saveAll" />
        <QuickRule />
        <Q n="undo" c={dim} />
        <QuickButton $small aria-label="Annuler"><Caret $color={dim} /></QuickButton>
        <Q n="redo" c={dim} />
        <QuickRule />
        <Q n="cut" c={dim} /><Q n="copy" c={dim} /><Q n="paste" c={dim} /><Q n="target" />
        <QuickRule />
        <Q n="winCube" />
        <QuickButton $small aria-label="Type"><Caret $color="#fff" /></QuickButton>
        <QuickRule />
        <Q n="mic" />
        <QuickRule />
        <Q n="hands" />
        <QuickRule />
        <Q n="windows" />
        <QuickButton $wide><Icon n="win" s={17} c="#f0f0f6" />Fenêtre <Caret $color="#fff" /></QuickButton>
        <QuickButton $wide><Icon n="lines" s={14} c="#f0f0f6" />Menu <Caret $color="#fff" /></QuickButton>
        <Q n="ruler" /><Q n="eyeList" />
        <QuickButton $small aria-label="Personnaliser"><Caret $color="#fff" /></QuickButton>
        <AppTitle>Designcenter Modélisation</AppTitle>
        <Siemens>SIEMENS</Siemens>
        <WindowButton aria-label="Réduire"><Icon n="minimize" s={12} c="#fff" /></WindowButton>
        <WindowButton aria-label="Restaurer"><Icon n="restore" s={13} c="#fff" /></WindowButton>
        <WindowButton aria-label="Fermer"><Icon n="close" s={12} c="#fff" /></WindowButton>
      </TitleBar>
      <TabBar>
        <Tab href="#fichier" $file>Fichier</Tab>
        {tabs.map((t) => <Tab key={t} href="#ruban" $active={t === 'Assemblages'}>{t}</Tab>)}
        <SearchBox>
          <input type="text" placeholder="Rechercher (Ctrl+Space)" aria-label="Rechercher" />
          <Icon n="search" s={16} />
        </SearchBox>
        <WindowButton aria-label="Aide"><Icon n="help" s={16} c="#f0f0f6" /></WindowButton>
        <WindowButton aria-label="Alertes"><Icon n="bang" s={16} c="#fff" /></WindowButton>
      </TabBar>
      <Ribbon />
      <Tools />
      <Work>
        <Rail>
          <RailButton $first aria-label="Réglages"><Icon n="gear" s={20} /></RailButton>
          {railIcons.map((n) => <RailButton key={n} aria-label={n} $active={n === 'asm'}><Icon n={n} /></RailButton>)}
        </Rail>
        <Navigator />
        <Strip>
          {stripIcons.map((t) => {
            const on = t[0] === '*'
            const n = on ? t.slice(1) : t
            return <StripButton key={n} aria-label={n} $on={on}><Icon n={n} /></StripButton>
          })}
          <hr />
          <StripEnd aria-label="Replier" />
        </Strip>
        <Document>
          <DocTabs>
            <DocTab><Icon n="discover" s={16} />Centre de découverte</DocTab>
            <DocTab><Icon n="bracket" s={16} />Coque_S25.prt</DocTab>
            <DocTab $active><Icon n="bracket" s={16} />Coque S25 ULTRA.prt <Icon n="closeBold" s={9} c="#05052b" /></DocTab>
          </DocTabs>
          <Canvas><PhoneCase /></Canvas>
        </Document>
      </Work>
      <Status>Sélectionner des objets puis appuyer sur le bouton milieu, ou double-cliquer sur un objet</Status>
    </Page>
  )
}

export default App
